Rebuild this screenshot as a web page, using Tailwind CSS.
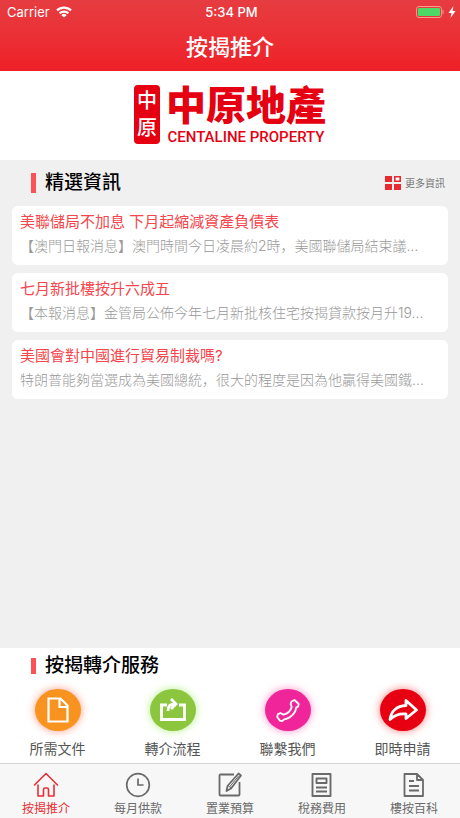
<!DOCTYPE html>
<html lang="zh">
<head>
  <meta charset="utf-8">
  <meta name="viewport" content="width=device-width, initial-scale=1">
  <title>按揭推介</title>
  <script src="https://cdn.jsdelivr.net/npm/@tailwindcss/browser@4"></script>
</head>
<body class="min-h-screen flex flex-col bg-[#f0f0f0] font-['Inter','Noto_Sans_CJK_TC',sans-serif]">

  <!-- status bar + title -->
  <header class="bg-linear-to-b from-[#e63c41] to-[#ef1f27] text-white">
    <div class="grid grid-cols-3 items-center h-6 pl-[7px] pr-1 text-[13px] leading-6">
      <div class="flex items-center gap-[6px]">
        <span>Carrier</span>
        <svg class="w-4 h-3" viewBox="0 0 16 12" fill="none" stroke="currentColor" stroke-width="2.2">
          <path d="M1 4.400a10 10 0 0 1 14 0M3.600 7.400a6.300 6.300 0 0 1 8.800 0"/>
          <path d="M8 11.600 5.400 9.200a3.600 3.600 0 0 1 5.200 0z" fill="currentColor" stroke="none"/>
        </svg>
      </div>
      <span class="text-center font-medium">5:34 PM</span>
      <div class="flex items-center justify-end gap-1">
        <svg class="w-7 h-3" viewBox="0 0 28 12">
          <rect x=".5" y=".5" width="25" height="11" rx="2.5" fill="none" stroke="#f5a08c"/>
          <rect x="2" y="2" width="22" height="8" rx="1" fill="#4cd964"/>
          <path d="M27 4v4" stroke="#f5a08c"/>
        </svg>
        <svg class="w-2 h-3" viewBox="0 0 8 12" fill="currentColor"><path d="M5.500 0 .5 7h3L2.500 12 7.500 5h-3z"/></svg>
      </div>
    </div>
    <h1 class="h-[47px] text-[22px] leading-[46px] font-medium text-center">按揭推介</h1>
  </header>

  <!-- company logo -->
  <div class="flex justify-center items-start gap-[6px] pt-[14px] pb-[13px] bg-white text-[#e50012]">
    <div class="flex flex-col items-center justify-center w-[26px] h-[59px] rounded bg-[#e50012] text-white text-[20px] leading-[27px] font-medium">
      <span>中</span>
      <span>原</span>
    </div>
    <div>
      <div class="text-[40px] leading-[42px] font-black">中原地產</div>
      <div class="font-['Roboto',sans-serif] font-medium text-[15px] leading-5 text-center whitespace-nowrap">CENTALINE PROPERTY</div>
    </div>
  </div>

  <!-- news -->
  <main class="flex-1 px-3">
    <div class="flex items-center h-[46px] pl-[19px] pr-[3px]">
      <span class="w-[5px] h-5 bg-[#fb5258]"></span>
      <h2 class="ml-[9px] text-[19px] leading-6 font-medium text-black">精選資訊</h2>
      <a href="#" class="ml-auto flex items-center gap-1 text-[10px] leading-4 text-[#777]">
        <svg class="w-4 h-[14px]" viewBox="0 0 16 14" fill="#e92a31">
          <path d="M0 0h7v6H0zM0 8h7v6H0zM9 8h7v6H9z"/>
          <path d="M9.800.8h5.400v4.400H9.800z" fill="#fff" stroke="#e92a31" stroke-width="1.6"/>
        </svg>
        更多資訊
      </a>
    </div>
    <div class="flex flex-col gap-2">
      <a href="#" class="block h-[59px] pl-2 pt-1 rounded-md bg-white">
        <h3 class="text-[15px] leading-6 text-[#f4464c]">美聯儲局不加息 下月起縮減資產負債表</h3>
        <p class="truncate font-['Inter','Noto_Sans_CJK_SC',sans-serif] text-[14px] leading-6 font-light text-[#999]">【澳門日報消息】澳門時間今日凌晨約2時，美國聯儲局結束議…</p>
      </a>
      <a href="#" class="block h-[59px] pl-2 pt-1 rounded-md bg-white">
        <h3 class="text-[15px] leading-6 text-[#f4464c]">七月新批樓按升六成五</h3>
        <p class="truncate font-['Inter','Noto_Sans_CJK_SC',sans-serif] text-[14px] leading-6 font-light text-[#999]">【本報消息】金管局公佈今年七月新批核住宅按揭貸款按月升19...</p>
      </a>
      <a href="#" class="block h-[59px] pl-2 pt-1 rounded-md bg-white">
        <h3 class="text-[15px] leading-6 text-[#f4464c]">美國會對中國進行貿易制裁嗎?</h3>
        <p class="truncate font-['Inter','Noto_Sans_CJK_SC',sans-serif] text-[14px] leading-6 font-light text-[#999]">特朗普能夠當選成為美國總統，很大的程度是因為他贏得美國鐵…</p>
      </a>
    </div>
  </main>

  <!-- referral services -->
  <section class="bg-white">
    <div class="flex items-center h-9 pl-[31px]">
      <span class="w-[5px] h-4 bg-[#fb5258]"></span>
      <h2 class="ml-[9px] text-[19px] leading-6 font-medium text-black">按揭轉介服務</h2>
    </div>
    <div class="grid grid-cols-4 pt-[5px] pb-1 text-[14px] leading-5 text-[#555]">
      <a href="#" class="flex flex-col items-center gap-2">
        <span class="flex items-center justify-center w-[46px] h-[42px] rounded-[50%] bg-[#f7931e] shadow-[0_0_8px_#ff9a80]">
          <svg class="w-7 h-7" viewBox="0 0 28 28" fill="none" stroke="#fff" stroke-width="2.2">
            <path d="M4.500 2.500h12l7 7v16h-19zM15.500 3v8h8"/>
          </svg>
        </span>
        所需文件
      </a>
      <a href="#" class="flex flex-col items-center gap-2">
        <span class="flex items-center justify-center w-[46px] h-[42px] rounded-[50%] bg-[#8cc63f] shadow-[0_0_8px_#b5f08a]">
          <svg class="w-7 h-7" viewBox="0 0 28 28" fill="none" stroke="#fff" stroke-width="2.8">
            <path d="M8 9H2.500v14.500h23V9H20"/>
            <path d="M9 15c0-4.500 1.500-7 7-7M12 3l5 5-5 5"/>
          </svg>
        </span>
        轉介流程
      </a>
      <a href="#" class="flex flex-col items-center gap-2">
        <span class="flex items-center justify-center w-[46px] h-[42px] rounded-[50%] bg-[#f0259a] shadow-[0_0_8px_#ff8fc8]">
          <svg class="w-7 h-7" viewBox="0 0 28 28" fill="none" stroke="#fff" stroke-width="1.8" stroke-linejoin="round">
            <path d="M17.500 5.500 20.500 4l4.200 4-.6 2.600-2 1c0 5-6 11.400-12 11.800l-1.800 1.600-2.400-.4L3.200 21l.6-2.600 2.600-1.400 3 1.600c4-.8 7.400-4 8.400-7.800l-1.200-2.600z"/>
          </svg>
        </span>
        聯繫我們
      </a>
      <a href="#" class="flex flex-col items-center gap-2">
        <span class="flex items-center justify-center w-[46px] h-[42px] rounded-[50%] bg-[#e60012] shadow-[0_0_8px_#ff7a7a]">
          <svg class="w-8 h-7" viewBox="0 0 32 28" fill="none" stroke="#fff" stroke-width="2.8" stroke-linejoin="round">
            <path d="M19 4.500 29.500 14 19 22.500V18c-6-.6-11 .8-16 5.500C4 15 10 10 19 9.500z"/>
          </svg>
        </span>
        即時申請
      </a>
    </div>
  </section>

  <!-- tab bar -->
  <nav class="grid grid-cols-5 h-[55px] pt-[7px] border-t border-[#d5d5d5] bg-[#f7f7f7] text-[12px] leading-5 text-[#6a6a6a]">
    <a href="#" class="flex flex-col items-center text-[#e92f36]">
      <svg class="w-7 h-7" viewBox="0 0 28 28" fill="none" stroke="currentColor" stroke-width="1.6" stroke-linejoin="round" stroke-linecap="round">
        <path d="M2.500 14 14 2.500 25.500 14M6 14v11h5.500v-6.500q0-1.500 1.500-1.500h2q1.500 0 1.500 1.500V25H22V14"/>
      </svg>
      按揭推介
    </a>
    <a href="#" class="flex flex-col items-center">
      <svg class="w-7 h-7" viewBox="0 0 28 28" fill="none" stroke="currentColor" stroke-width="1.7">
        <circle cx="14" cy="14" r="11.300"/>
        <path d="M14 7.500V14h5.500"/>
      </svg>
      每月供款
    </a>
    <a href="#" class="flex flex-col items-center">
      <svg class="w-7 h-7" viewBox="0 0 28 28" fill="none" stroke="currentColor" stroke-width="1.8" stroke-linejoin="round">
        <path d="M18 3.500H4.500q-1 0-1 1v19q0 1 1 1h18q1 0 1-1V11"/>
        <path d="m22.500 2.500 2.500 2L15 17.500l-4.500 2.500 1-5z" />
        <path d="m12 14.500 3 2.500M23 4.500l-9.500 11.500" stroke-width="1"/>
      </svg>
      置業預算
    </a>
    <a href="#" class="flex flex-col items-center">
      <svg class="w-7 h-7" viewBox="0 0 28 28" fill="none" stroke="currentColor" stroke-width="1.9" stroke-linejoin="round">
        <path d="M4.500 3h18v22h-18zM8.500 7.500h10V12h-10zM8 16.500h11M8 20.500h11"/>
      </svg>
      稅務費用
    </a>
    <a href="#" class="flex flex-col items-center">
      <svg class="w-7 h-7" viewBox="0 0 28 28" fill="none" stroke="currentColor" stroke-width="1.8" stroke-linejoin="round">
        <path d="M4.500 3H17l6 6v16H4.500zM17 3v6h6M9 10h5M9 15h10M9 19.500h10"/>
      </svg>
      樓按百科
    </a>
  </nav>

</body>
</html>
